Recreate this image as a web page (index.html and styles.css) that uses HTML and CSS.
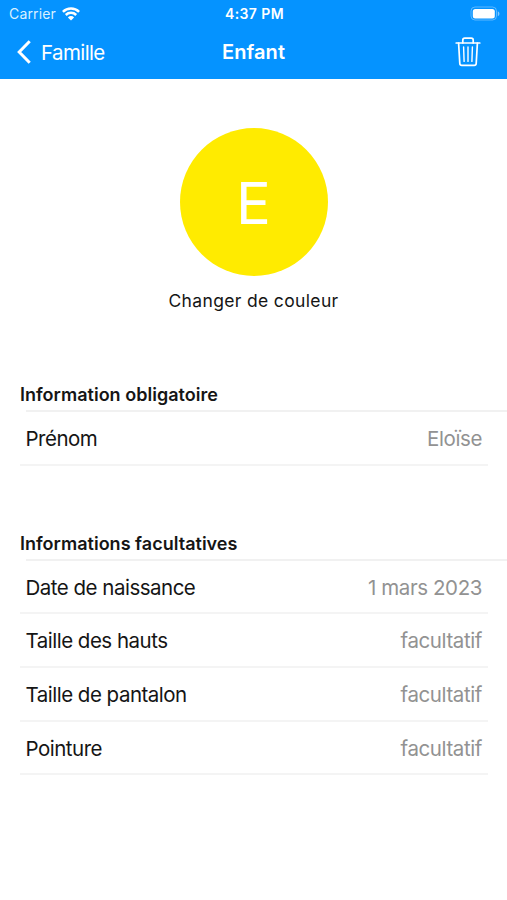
FILE: index.html
```html
<!DOCTYPE html>
<html lang="fr">
<head>
    <meta charset="UTF-8">
    <title>Enfant</title>
    <link rel="stylesheet" href="styles.css">
</head>
<body>
    <header class="header">
        <div class="status">
            <div class="carrier">
                <span>Carrier</span>
                <svg width="18" height="14" viewBox="0 0 18 14" fill="none" stroke="#fff" stroke-width="2.5">
                    <path d="M0.9 4.9a11.5 11.5 0 0 1 16.2 0"/>
                    <path d="M3.8 8a7.4 7.4 0 0 1 10.4 0"/>
                    <path d="M9 13.6L5.9 10.4a4.4 4.4 0 0 1 6.2 0z" fill="#fff" stroke="none"/>
                </svg>
            </div>
            <div class="time">4:37 PM</div>
            <div class="battery">
                <svg width="30" height="16" viewBox="0 0 30 16">
                    <rect x="1" y="1" width="25.5" height="13" rx="4" fill="none" stroke="#fff" stroke-opacity=".35"/>
                    <rect x="2.8" y="3" width="22" height="9.4" rx="2.5" fill="#fff"/>
                    <path d="M27.8 5.2v5a2.7 2.7 0 0 0 0-5z" fill="#fff" fill-opacity=".5"/>
                </svg>
            </div>
        </div>
        <div class="nav">
            <div class="back">
                <svg width="14" height="24" viewBox="0 0 14 24" fill="none" stroke="#fff" stroke-width="3">
                    <path d="M12.7 1.3L2.2 12l10.5 10.7"/>
                </svg>
                <span>Famille</span>
            </div>
            <div class="title">Enfant</div>
            <div class="delete">
                <svg width="26" height="30" viewBox="0 0 26 30" fill="none" stroke="#fff" stroke-width="1.7" stroke-linecap="round" stroke-linejoin="round">
                    <path d="M1.2 6h23.6"/>
                    <path d="M7.8 6V3.2a2 2 0 0 1 2-2h6.4a2 2 0 0 1 2 2V6"/>
                    <path d="M3.6 6l1.2 20.5a2 2 0 0 0 2 1.9h12.4a2 2 0 0 0 2-1.9L22.4 6"/>
                    <path d="M8.6 10l.5 14.4M13 10v14.4M17.4 10l-.5 14.4" stroke-width="1.4"/>
                </svg>
            </div>
        </div>
    </header>

    <div class="profile">
        <div class="avatar">E</div>
        <div class="change-color">Changer de couleur</div>
    </div>

    <div class="section">
        <h2>Information obligatoire</h2>
        <div class="list">
            <div class="row">
                <span class="label">Prénom</span>
                <span class="value">Eloïse</span>
            </div>
        </div>
    </div>

    <div class="section">
        <h2>Informations facultatives</h2>
        <div class="list">
            <div class="row">
                <span class="label">Date de naissance</span>
                <span class="value">1 mars 2023</span>
            </div>
            <div class="row">
                <span class="label">Taille des hauts</span>
                <span class="value">facultatif</span>
            </div>
            <div class="row">
                <span class="label">Taille de pantalon</span>
                <span class="value">facultatif</span>
            </div>
            <div class="row">
                <span class="label">Pointure</span>
                <span class="value">facultatif</span>
            </div>
        </div>
    </div>
</body>
</html>
```
FILE: styles.css
```css
*{
    padding: 0;
    margin: 0;
    box-sizing: border-box;
}
body{
    background-color: #fff;
    color: #151515;
    font-family: Inter, "Liberation Sans", sans-serif;
}
svg{
    display: block;
}
.header{
    height: 79px;
    background-color: #0593ff;
    color: #fff;
}
.status, .nav{
    display: grid;
    grid-template-columns: 1fr auto 1fr;
    align-items: center;
}
.status{
    height: 27px;
    padding: 0 7px 0 9px;
    font-size: 14px;
}
.carrier{
    display: flex;
    align-items: center;
    gap: 6px;
    color: #d9f0ff;
    letter-spacing: .15px;
}
.time{
    font-size: 14px;
    font-weight: 600;
    letter-spacing: .4px;
}
.battery, .delete{
    justify-self: end;
}
.nav{
    height: 50px;
    padding: 0 17px;
    font-size: 20.5px;
}
.delete{
    margin-right: 9px;
}
.back{
    display: flex;
    align-items: center;
    gap: 10px;
    letter-spacing: -.6px;
}
.title{
    font-size: 20px;
    font-weight: 600;
    letter-spacing: .1px;
}

.profile{
    display: flex;
    flex-direction: column;
    align-items: center;
    padding-top: 49px;
}
.avatar{
    width: 148px;
    height: 148px;
    border-radius: 50%;
    background-color: #ffeb00;
    color: #fff;
    font-size: 58px;
    line-height: 150px;
    text-align: center;
}
.change-color{
    margin-top: 13px;
    height: 24px;
    line-height: 24px;
    font-size: 17.5px;
    letter-spacing: .35px;
}

.section{
    margin-top: 65px;
}
.section h2{
    padding-left: 20px;
    height: 28px;
    line-height: 25px;
    font-size: 18px;
    font-weight: 600;
    letter-spacing: .02px;
}
.profile + .section{
    margin-top: 69px;
}
.list{
    padding: 0 19px 0 20px;
}
.list::before{
    content: "";
    display: block;
    height: 2px;
    margin: 0 -19px 0 6px;
    background-color: #f1f1f1;
}
.row{
    display: flex;
    justify-content: space-between;
    align-items: center;
    height: 53.7px;
    padding: 1px 6px 0 5.5px;
    border-bottom: 2px solid #f4f4f4;
    font-size: 20.5px;
    letter-spacing: -.4px;
}
.label{
    letter-spacing: -.5px;
}
.value{
    color: #929292;
}
```
